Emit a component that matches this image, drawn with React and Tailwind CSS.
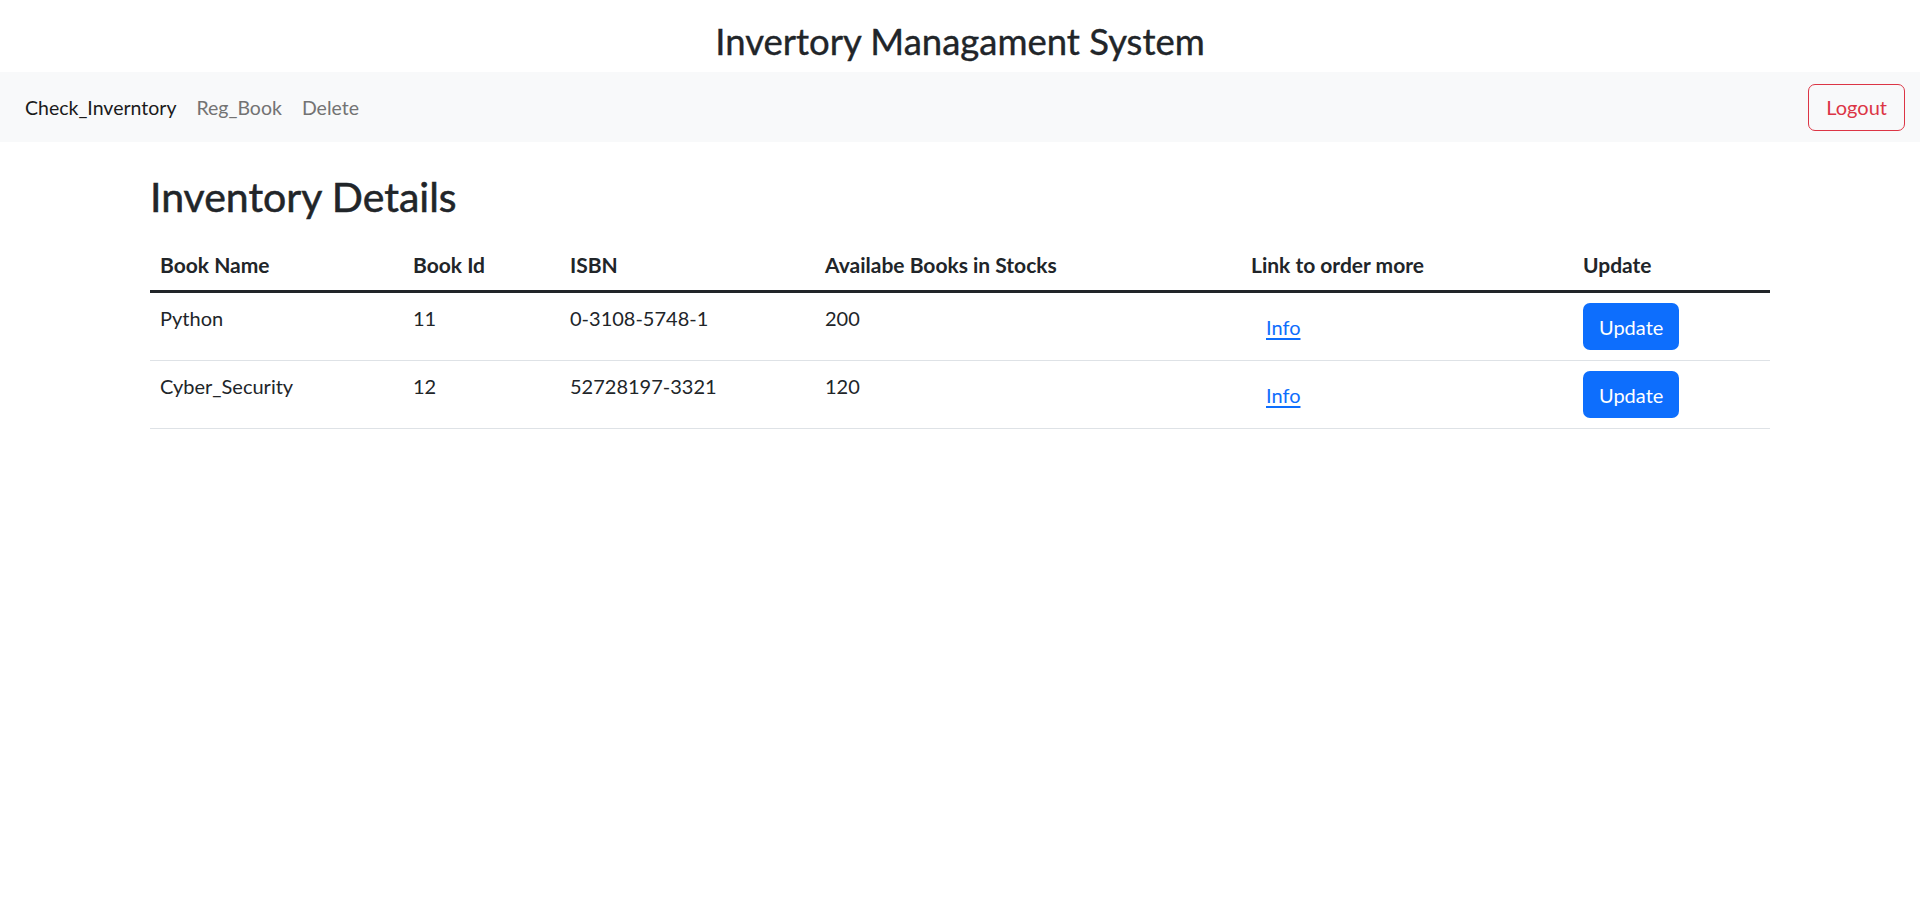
const books = [
  { name: 'Python', id: 11, isbn: '0-3108-5748-1', stock: 200 },
  { name: 'Cyber_Security', id: 12, isbn: '52728197-3321', stock: 120 },
];

const columns = [
  { label: 'Book Name', width: 'w-[253px]' },
  { label: 'Book Id', width: 'w-[157px]' },
  { label: 'ISBN', width: 'w-[255px]' },
  { label: 'Availabe Books in Stocks', width: 'w-[426px]' },
  { label: 'Link to order more', width: 'w-[332px]' },
  { label: 'Update', width: 'w-[197px]' },
];

function Navbar() {
  return (
    <nav className="h-[70px] bg-[#f8f9fa] flex items-center justify-between px-[15px]">
      <ul className="flex items-center pt-[1px] text-[19.5px] leading-[30px]">
        <li><a href="#" className="px-[10px] text-[#1a1a1a]">Check_Inverntory</a></li>
        <li><a href="#" className="px-[10px] text-[#737373]">Reg_Book</a></li>
        <li><a href="#" className="px-[10px] text-[#737373]">Delete</a></li>
      </ul>
      <button className="h-[47px] px-[17px] text-[20px] leading-[30px] text-[#dc3545] border border-[#dc3545] rounded-[7px]">
        Logout
      </button>
    </nav>
  );
}

export default function App() {
  return (
    <div className="min-h-screen bg-white text-[#212529]" style={{ fontFamily: 'Lato, "Noto Sans", sans-serif' }}>
      <div className="h-[72px] pt-[20px] text-center">
        <h2 className="text-[36.5px] leading-[1.2] font-normal [-webkit-text-stroke:0.4px_#212529]">Invertory Managament System</h2>
      </div>
      <Navbar />
      <main className="w-[1650px] mx-auto px-[15px]">
        <h2 className="mt-[30px] text-[41px] leading-[1.2] font-normal [-webkit-text-stroke:0.55px_#212529]">Inventory Details</h2>
        <table className="mt-[19px] w-full table-fixed border-collapse text-[20px] leading-[30px]">
          <thead>
            <tr className="border-b-[3px] border-[#212529]">
              {columns.map((c) => (
                <th key={c.label} className={`${c.width} p-[10px] text-left font-bold text-[21px]`}>{c.label}</th>
              ))}
            </tr>
          </thead>
          <tbody>
            {books.map((b) => (
              <tr key={b.id} className="border-b border-[#dee2e6]">
                <td className="p-[10px] align-top">{b.name}</td>
                <td className="p-[10px] align-top">{b.id}</td>
                <td className="p-[10px] align-top">{b.isbn}</td>
                <td className="p-[10px] align-top">{b.stock}</td>
                <td className="p-[10px] align-middle">
                  <a href="#" className="px-[15px] text-[#0d6efd] underline underline-offset-[3px]">Info</a>
                </td>
                <td className="p-[10px] align-middle">
                  <button className="h-[47px] px-[16px] bg-[#0d6efd] text-white rounded-[7px]">Update</button>
                </td>
              </tr>
            ))}
          </tbody>
        </table>
      </main>
    </div>
  );
}
